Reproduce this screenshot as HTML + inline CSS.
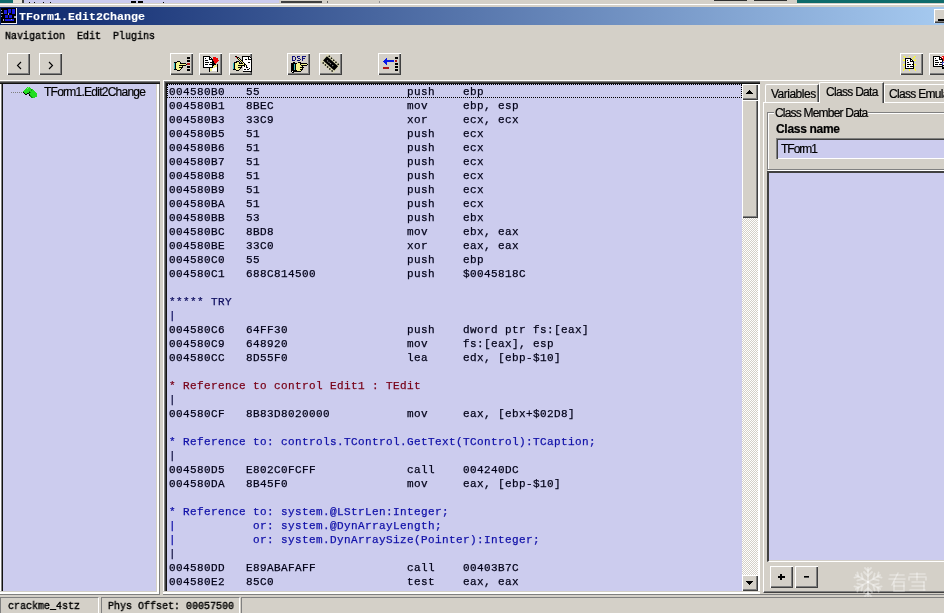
<!DOCTYPE html>
<html><head><meta charset="utf-8">
<style>
*{box-sizing:border-box;margin:0;padding:0}
html,body{width:944px;height:613px;overflow:hidden}
body{position:relative;background:#D4D0C8;font-family:"Liberation Sans",sans-serif;font-size:11px;color:#000;-webkit-text-stroke:0.2px currentColor}
.a{position:absolute}
body>div{will-change:transform}
.btn{position:absolute;width:23px;height:22px;background:#D4D0C8;box-shadow:inset 1px 1px 0 #fff, inset -1px -1px 0 #404040, inset -2px -2px 0 #808080}
.sb{position:absolute;width:16px;height:16px;background:#D4D0C8;box-shadow:inset 1px 1px 0 #fff, inset -1px -1px 0 #404040, inset -2px -2px 0 #808080}
.simsun{font-family:"Liberation Mono",monospace;font-size:11px;white-space:pre;transform-origin:0 0;transform:scaleX(0.9091);-webkit-text-stroke:0.4px currentColor}
.code{position:absolute;left:169px;font-family:"Liberation Mono",monospace;font-size:11px;letter-spacing:0.4px;white-space:pre;color:#000018;line-height:14px;-webkit-text-stroke:0.25px currentColor}
.lav{background:#CCCCEE}
.n{color:#101060}.r{color:#780018}.b{color:#1010A8}.d{color:#101040}
</style></head><body>

<!-- background window strip -->
<div class="a" style="left:0;top:0;width:944px;height:3px;background:#D4D0C8"></div>
<div class="a" style="left:0;top:0;width:13px;height:3px;background:#0F6B6B"></div>
<div class="a" style="left:13px;top:0;width:9px;height:3px;background:#E4E0D8"></div>
<div class="a" style="left:22px;top:0;width:2px;height:3px;background:#404040"></div>
<div class="a" style="left:24px;top:0;width:255px;height:3px;background:#CCCCEE"></div>
<div class="a" style="left:281px;top:1px;width:41px;height:2px;background:#404040"></div>
<div class="a" style="left:714px;top:0;width:33px;height:1px;background:#303030"></div>
<svg class="a" style="left:0;top:0" width="400" height="4" shape-rendering="crispEdges"><g fill="#000"><rect x="29" y="2" width="1" height="1"/><rect x="34" y="2" width="1" height="1"/><rect x="43" y="2" width="1" height="1"/><rect x="50" y="2" width="1" height="1"/><rect x="131" y="1" width="5" height="2"/><rect x="138" y="1" width="5" height="2"/><rect x="163" y="2" width="1" height="1"/><rect x="327" y="1" width="1" height="2" fill="#606060"/><rect x="379" y="1" width="1" height="2" fill="#909090"/></g></svg>
<div class="a" style="left:754px;top:0;width:33px;height:1px;background:#303030"></div>
<div class="a" style="left:797px;top:0;width:147px;height:3px;background:#0F6B6B"></div>
<div class="a" style="left:0;top:4px;width:944px;height:1px;background:#fff"></div>

<!-- title bar -->
<div class="a" style="left:0;top:7px;width:944px;height:18px;background:linear-gradient(to right,#0A246A,#A6CAF0)"></div>
<svg class="a" style="left:0;top:7px" width="18" height="18" shape-rendering="crispEdges">
<rect x="1" y="1" width="16" height="16" fill="#000"/><rect x="16" y="1" width="1" height="16" fill="#E8E8F8"/><rect x="1" y="16" width="16" height="1" fill="#E8E8F8"/>
<g fill="#1818E0"><rect x="4" y="3" width="3" height="4"/><rect x="8" y="2" width="3" height="4"/><rect x="12" y="2" width="3" height="5"/><rect x="5" y="8" width="3" height="3"/><rect x="9" y="8" width="3" height="3"/><rect x="5" y="12" width="9" height="2"/></g>
<g fill="#A0A0C0"><rect x="1" y="3" width="1" height="1"/><rect x="1" y="6" width="2" height="1"/><rect x="1" y="9" width="1" height="1"/><rect x="3" y="12" width="1" height="2"/><rect x="8" y="6" width="1" height="2"/><rect x="14" y="9" width="2" height="2"/><rect x="11" y="12" width="1" height="1"/></g>
</svg>
<div class="a simsun" style="left:19px;top:10px;font-size:11.6px;color:#fff;font-weight:bold;transform:none;letter-spacing:0.04px;-webkit-text-stroke:0.1px #fff">TForm1.Edit2Change</div>
<div class="btn" style="left:934px;top:9px;width:16px;height:14px"></div>
<div class="a" style="left:938px;top:19px;width:6px;height:2px;background:#000"></div>

<!-- menu -->
<div class="a simsun" style="left:5px;top:30px">Navigation</div>
<div class="a simsun" style="left:77px;top:30px">Edit</div>
<div class="a simsun" style="left:113px;top:30px">Plugins</div>

<!-- toolbar -->
<div class="btn" style="left:7px;top:53px"></div>
<div class="btn" style="left:39px;top:53px"></div>
<div class="btn" style="left:170px;top:53px"></div>
<div class="btn" style="left:199px;top:53px"></div>
<div class="btn" style="left:229px;top:53px"></div>
<div class="btn" style="left:287px;top:53px"></div>
<div class="btn" style="left:319px;top:53px"></div>
<div class="btn" style="left:378px;top:53px"></div>
<div class="btn" style="left:900px;top:53px"></div>
<div class="btn" style="left:929px;top:53px"></div>

<!-- icons -->
<svg class="a" style="left:170px;top:53px" width="23" height="22" shape-rendering="crispEdges"><rect x="17" y="4" width="3" height="1" fill="#000000"/><rect x="17" y="5" width="3" height="1" fill="#000000"/><rect x="17" y="7" width="3" height="1" fill="#000000"/><rect x="7" y="8" width="3" height="1" fill="#000000"/><rect x="17" y="8" width="3" height="1" fill="#000000"/><rect x="4" y="9" width="3" height="1" fill="#000000"/><rect x="7" y="9" width="3" height="1" fill="#F4F48C"/><rect x="10" y="9" width="1" height="1" fill="#000000"/><rect x="4" y="10" width="1" height="1" fill="#38C0C0"/><rect x="5" y="10" width="1" height="1" fill="#000000"/><rect x="6" y="10" width="4" height="1" fill="#F4F48C"/><rect x="10" y="10" width="6" height="1" fill="#000000"/><rect x="17" y="10" width="3" height="1" fill="#B01818"/><rect x="4" y="11" width="1" height="1" fill="#38C0C0"/><rect x="5" y="11" width="1" height="1" fill="#000000"/><rect x="6" y="11" width="10" height="1" fill="#F4F48C"/><rect x="16" y="11" width="1" height="1" fill="#000000"/><rect x="17" y="11" width="3" height="1" fill="#B01818"/><rect x="4" y="12" width="1" height="1" fill="#38C0C0"/><rect x="5" y="12" width="1" height="1" fill="#000000"/><rect x="6" y="12" width="3" height="1" fill="#F4F48C"/><rect x="9" y="12" width="7" height="1" fill="#000000"/><rect x="4" y="13" width="1" height="1" fill="#38C0C0"/><rect x="5" y="13" width="1" height="1" fill="#000000"/><rect x="6" y="13" width="6" height="1" fill="#F4F48C"/><rect x="12" y="13" width="1" height="1" fill="#000000"/><rect x="17" y="13" width="3" height="1" fill="#000000"/><rect x="4" y="14" width="1" height="1" fill="#38C0C0"/><rect x="5" y="14" width="1" height="1" fill="#000000"/><rect x="6" y="14" width="3" height="1" fill="#F4F48C"/><rect x="9" y="14" width="4" height="1" fill="#000000"/><rect x="17" y="14" width="3" height="1" fill="#000000"/><rect x="4" y="15" width="1" height="1" fill="#38C0C0"/><rect x="5" y="15" width="1" height="1" fill="#000000"/><rect x="6" y="15" width="5" height="1" fill="#F4F48C"/><rect x="11" y="15" width="1" height="1" fill="#000000"/><rect x="4" y="16" width="3" height="1" fill="#000000"/><rect x="7" y="16" width="3" height="1" fill="#F4F48C"/><rect x="10" y="16" width="1" height="1" fill="#000000"/><rect x="17" y="16" width="3" height="1" fill="#000000"/><rect x="7" y="17" width="3" height="1" fill="#000000"/><rect x="17" y="17" width="3" height="1" fill="#000000"/></svg>
<svg class="a" style="left:199px;top:53px" width="23" height="22" shape-rendering="crispEdges"><rect x="4" y="3" width="7" height="1" fill="#000000"/><rect x="4" y="4" width="1" height="1" fill="#000000"/><rect x="5" y="4" width="5" height="1" fill="#FFFFFF"/><rect x="10" y="4" width="2" height="1" fill="#000000"/><rect x="14" y="4" width="3" height="1" fill="#F00808"/><rect x="4" y="5" width="1" height="1" fill="#000000"/><rect x="5" y="5" width="1" height="1" fill="#FFFFFF"/><rect x="6" y="5" width="1" height="1" fill="#000000"/><rect x="7" y="5" width="3" height="1" fill="#FFFFFF"/><rect x="10" y="5" width="1" height="1" fill="#000000"/><rect x="11" y="5" width="1" height="1" fill="#FFFFFF"/><rect x="12" y="5" width="1" height="1" fill="#000000"/><rect x="14" y="5" width="5" height="1" fill="#F00808"/><rect x="4" y="6" width="1" height="1" fill="#000000"/><rect x="5" y="6" width="5" height="1" fill="#FFFFFF"/><rect x="10" y="6" width="4" height="1" fill="#000000"/><rect x="14" y="6" width="5" height="1" fill="#F00808"/><rect x="4" y="7" width="1" height="1" fill="#000000"/><rect x="5" y="7" width="1" height="1" fill="#FFFFFF"/><rect x="6" y="7" width="3" height="1" fill="#000000"/><rect x="9" y="7" width="4" height="1" fill="#FFFFFF"/><rect x="13" y="7" width="1" height="1" fill="#000000"/><rect x="14" y="7" width="6" height="1" fill="#F00808"/><rect x="4" y="8" width="1" height="1" fill="#000000"/><rect x="5" y="8" width="8" height="1" fill="#FFFFFF"/><rect x="13" y="8" width="2" height="1" fill="#000000"/><rect x="15" y="8" width="4" height="1" fill="#F00808"/><rect x="4" y="9" width="1" height="1" fill="#000000"/><rect x="5" y="9" width="1" height="1" fill="#FFFFFF"/><rect x="6" y="9" width="4" height="1" fill="#000000"/><rect x="10" y="9" width="1" height="1" fill="#FFFFFF"/><rect x="11" y="9" width="4" height="1" fill="#000000"/><rect x="15" y="9" width="3" height="1" fill="#F00808"/><rect x="4" y="10" width="1" height="1" fill="#000000"/><rect x="5" y="10" width="8" height="1" fill="#FFFFFF"/><rect x="13" y="10" width="3" height="1" fill="#000000"/><rect x="16" y="10" width="1" height="1" fill="#F00808"/><rect x="4" y="11" width="1" height="1" fill="#000000"/><rect x="5" y="11" width="1" height="1" fill="#FFFFFF"/><rect x="6" y="11" width="3" height="1" fill="#000000"/><rect x="9" y="11" width="1" height="1" fill="#FFFFFF"/><rect x="10" y="11" width="7" height="1" fill="#000000"/><rect x="18" y="11" width="1" height="1" fill="#000000"/><rect x="4" y="12" width="1" height="1" fill="#000000"/><rect x="5" y="12" width="8" height="1" fill="#FFFFFF"/><rect x="13" y="12" width="2" height="1" fill="#000000"/><rect x="15" y="12" width="3" height="1" fill="#F4F48C"/><rect x="18" y="12" width="1" height="1" fill="#000000"/><rect x="4" y="13" width="1" height="1" fill="#000000"/><rect x="5" y="13" width="8" height="1" fill="#FFFFFF"/><rect x="13" y="13" width="1" height="1" fill="#000000"/><rect x="14" y="13" width="4" height="1" fill="#F4F48C"/><rect x="18" y="13" width="1" height="1" fill="#000000"/><rect x="4" y="14" width="10" height="1" fill="#000000"/><rect x="14" y="14" width="2" height="1" fill="#F4F48C"/><rect x="16" y="14" width="2" height="1" fill="#FFFFFF"/><rect x="18" y="14" width="1" height="1" fill="#000000"/><rect x="10" y="15" width="1" height="1" fill="#000000"/><rect x="11" y="15" width="2" height="1" fill="#F4F48C"/><rect x="13" y="15" width="5" height="1" fill="#FFFFFF"/><rect x="18" y="15" width="1" height="1" fill="#000000"/><rect x="10" y="16" width="1" height="1" fill="#000000"/><rect x="11" y="16" width="2" height="1" fill="#F4F48C"/><rect x="13" y="16" width="5" height="1" fill="#FFFFFF"/><rect x="18" y="16" width="1" height="1" fill="#000000"/><rect x="10" y="17" width="1" height="1" fill="#000000"/><rect x="11" y="17" width="2" height="1" fill="#F4F48C"/><rect x="13" y="17" width="5" height="1" fill="#FFFFFF"/><rect x="18" y="17" width="1" height="1" fill="#000000"/><rect x="10" y="18" width="1" height="1" fill="#000000"/><rect x="18" y="18" width="1" height="1" fill="#000000"/></svg>
<svg class="a" style="left:229px;top:53px" width="23" height="22" shape-rendering="crispEdges"><rect x="6" y="3" width="2" height="1" fill="#000000"/><rect x="13" y="3" width="8" height="1" fill="#000000"/><rect x="7" y="4" width="1" height="1" fill="#F00808"/><rect x="8" y="4" width="2" height="1" fill="#000000"/><rect x="13" y="4" width="1" height="1" fill="#000000"/><rect x="14" y="4" width="5" height="1" fill="#FFFFFF"/><rect x="19" y="4" width="1" height="1" fill="#000000"/><rect x="20" y="4" width="1" height="1" fill="#FFFFFF"/><rect x="21" y="4" width="1" height="1" fill="#000000"/><rect x="8" y="5" width="1" height="1" fill="#000000"/><rect x="9" y="5" width="1" height="1" fill="#F4F48C"/><rect x="10" y="5" width="1" height="1" fill="#000000"/><rect x="13" y="5" width="1" height="1" fill="#000000"/><rect x="14" y="5" width="5" height="1" fill="#FFFFFF"/><rect x="19" y="5" width="1" height="1" fill="#000000"/><rect x="20" y="5" width="2" height="1" fill="#FFFFFF"/><rect x="22" y="5" width="1" height="1" fill="#000000"/><rect x="9" y="6" width="1" height="1" fill="#000000"/><rect x="10" y="6" width="1" height="1" fill="#F4F48C"/><rect x="11" y="6" width="1" height="1" fill="#000000"/><rect x="13" y="6" width="1" height="1" fill="#000000"/><rect x="14" y="6" width="2" height="1" fill="#FFFFFF"/><rect x="16" y="6" width="2" height="1" fill="#000000"/><rect x="18" y="6" width="1" height="1" fill="#FFFFFF"/><rect x="19" y="6" width="4" height="1" fill="#000000"/><rect x="10" y="7" width="1" height="1" fill="#000000"/><rect x="11" y="7" width="1" height="1" fill="#F4F48C"/><rect x="12" y="7" width="2" height="1" fill="#000000"/><rect x="14" y="7" width="8" height="1" fill="#FFFFFF"/><rect x="22" y="7" width="1" height="1" fill="#000000"/><rect x="7" y="8" width="3" height="1" fill="#000000"/><rect x="11" y="8" width="1" height="1" fill="#000000"/><rect x="12" y="8" width="1" height="1" fill="#F4F48C"/><rect x="13" y="8" width="1" height="1" fill="#000000"/><rect x="14" y="8" width="8" height="1" fill="#FFFFFF"/><rect x="22" y="8" width="1" height="1" fill="#000000"/><rect x="5" y="9" width="3" height="1" fill="#000000"/><rect x="8" y="9" width="2" height="1" fill="#F4F48C"/><rect x="10" y="9" width="1" height="1" fill="#000000"/><rect x="12" y="9" width="1" height="1" fill="#000000"/><rect x="13" y="9" width="1" height="1" fill="#F4F48C"/><rect x="14" y="9" width="1" height="1" fill="#000000"/><rect x="15" y="9" width="4" height="1" fill="#FFFFFF"/><rect x="19" y="9" width="2" height="1" fill="#000000"/><rect x="21" y="9" width="1" height="1" fill="#FFFFFF"/><rect x="22" y="9" width="1" height="1" fill="#000000"/><rect x="4" y="10" width="1" height="1" fill="#38C0C0"/><rect x="5" y="10" width="1" height="1" fill="#000000"/><rect x="6" y="10" width="4" height="1" fill="#F4F48C"/><rect x="10" y="10" width="4" height="1" fill="#000000"/><rect x="14" y="10" width="1" height="1" fill="#F4F48C"/><rect x="15" y="10" width="1" height="1" fill="#000000"/><rect x="16" y="10" width="6" height="1" fill="#FFFFFF"/><rect x="22" y="10" width="1" height="1" fill="#000000"/><rect x="4" y="11" width="1" height="1" fill="#38C0C0"/><rect x="5" y="11" width="1" height="1" fill="#000000"/><rect x="6" y="11" width="9" height="1" fill="#F4F48C"/><rect x="15" y="11" width="2" height="1" fill="#000000"/><rect x="17" y="11" width="5" height="1" fill="#FFFFFF"/><rect x="22" y="11" width="1" height="1" fill="#000000"/><rect x="4" y="12" width="1" height="1" fill="#38C0C0"/><rect x="5" y="12" width="1" height="1" fill="#000000"/><rect x="6" y="12" width="3" height="1" fill="#F4F48C"/><rect x="9" y="12" width="7" height="1" fill="#000000"/><rect x="16" y="12" width="1" height="1" fill="#F4F48C"/><rect x="17" y="12" width="1" height="1" fill="#000000"/><rect x="18" y="12" width="4" height="1" fill="#FFFFFF"/><rect x="22" y="12" width="1" height="1" fill="#000000"/><rect x="4" y="13" width="1" height="1" fill="#38C0C0"/><rect x="5" y="13" width="1" height="1" fill="#000000"/><rect x="6" y="13" width="6" height="1" fill="#F4F48C"/><rect x="12" y="13" width="1" height="1" fill="#000000"/><rect x="14" y="13" width="1" height="1" fill="#FFFFFF"/><rect x="15" y="13" width="1" height="1" fill="#000000"/><rect x="16" y="13" width="1" height="1" fill="#FFFFFF"/><rect x="17" y="13" width="1" height="1" fill="#000000"/><rect x="18" y="13" width="4" height="1" fill="#FFFFFF"/><rect x="22" y="13" width="1" height="1" fill="#000000"/><rect x="4" y="14" width="1" height="1" fill="#38C0C0"/><rect x="5" y="14" width="1" height="1" fill="#000000"/><rect x="6" y="14" width="3" height="1" fill="#F4F48C"/><rect x="9" y="14" width="4" height="1" fill="#000000"/><rect x="14" y="14" width="3" height="1" fill="#FFFFFF"/><rect x="17" y="14" width="2" height="1" fill="#000000"/><rect x="19" y="14" width="3" height="1" fill="#FFFFFF"/><rect x="22" y="14" width="1" height="1" fill="#000000"/><rect x="4" y="15" width="1" height="1" fill="#38C0C0"/><rect x="5" y="15" width="1" height="1" fill="#000000"/><rect x="6" y="15" width="5" height="1" fill="#F4F48C"/><rect x="11" y="15" width="1" height="1" fill="#000000"/><rect x="14" y="15" width="6" height="1" fill="#FFFFFF"/><rect x="20" y="15" width="1" height="1" fill="#000000"/><rect x="21" y="15" width="1" height="1" fill="#FFFFFF"/><rect x="22" y="15" width="1" height="1" fill="#000000"/><rect x="4" y="16" width="3" height="1" fill="#000000"/><rect x="7" y="16" width="3" height="1" fill="#F4F48C"/><rect x="10" y="16" width="1" height="1" fill="#000000"/><rect x="14" y="16" width="1" height="1" fill="#FFFFFF"/><rect x="15" y="16" width="2" height="1" fill="#000000"/><rect x="17" y="16" width="1" height="1" fill="#FFFFFF"/><rect x="18" y="16" width="2" height="1" fill="#000000"/><rect x="20" y="16" width="2" height="1" fill="#FFFFFF"/><rect x="22" y="16" width="1" height="1" fill="#000000"/><rect x="7" y="17" width="3" height="1" fill="#000000"/><rect x="14" y="17" width="8" height="1" fill="#FFFFFF"/><rect x="22" y="17" width="1" height="1" fill="#000000"/><rect x="14" y="18" width="9" height="1" fill="#000000"/></svg>
<svg class="a" style="left:287px;top:53px" width="23" height="22" shape-rendering="crispEdges"><rect x="5" y="3" width="3" height="1" fill="#101078"/><rect x="10" y="3" width="3" height="1" fill="#101078"/><rect x="15" y="3" width="4" height="1" fill="#101078"/><rect x="5" y="4" width="1" height="1" fill="#101078"/><rect x="8" y="4" width="1" height="1" fill="#101078"/><rect x="10" y="4" width="1" height="1" fill="#101078"/><rect x="15" y="4" width="1" height="1" fill="#101078"/><rect x="5" y="5" width="1" height="1" fill="#101078"/><rect x="8" y="5" width="1" height="1" fill="#101078"/><rect x="11" y="5" width="2" height="1" fill="#101078"/><rect x="15" y="5" width="3" height="1" fill="#101078"/><rect x="5" y="6" width="1" height="1" fill="#101078"/><rect x="8" y="6" width="1" height="1" fill="#101078"/><rect x="13" y="6" width="1" height="1" fill="#101078"/><rect x="15" y="6" width="1" height="1" fill="#101078"/><rect x="5" y="7" width="3" height="1" fill="#101078"/><rect x="10" y="7" width="3" height="1" fill="#101078"/><rect x="15" y="7" width="1" height="1" fill="#101078"/><rect x="6" y="9" width="2" height="1" fill="#000000"/><rect x="11" y="9" width="3" height="1" fill="#000000"/><rect x="4" y="10" width="6" height="1" fill="#000000"/><rect x="10" y="10" width="3" height="1" fill="#F4F48C"/><rect x="13" y="10" width="7" height="1" fill="#000000"/><rect x="4" y="11" width="3" height="1" fill="#000000"/><rect x="7" y="11" width="1" height="1" fill="#38C0C0"/><rect x="8" y="11" width="1" height="1" fill="#000000"/><rect x="9" y="11" width="4" height="1" fill="#F4F48C"/><rect x="13" y="11" width="1" height="1" fill="#000000"/><rect x="14" y="11" width="6" height="1" fill="#F4F48C"/><rect x="20" y="11" width="1" height="1" fill="#000000"/><rect x="4" y="12" width="3" height="1" fill="#000000"/><rect x="7" y="12" width="1" height="1" fill="#38C0C0"/><rect x="8" y="12" width="1" height="1" fill="#000000"/><rect x="9" y="12" width="5" height="1" fill="#F4F48C"/><rect x="14" y="12" width="6" height="1" fill="#000000"/><rect x="4" y="13" width="3" height="1" fill="#000000"/><rect x="7" y="13" width="1" height="1" fill="#38C0C0"/><rect x="8" y="13" width="1" height="1" fill="#000000"/><rect x="9" y="13" width="6" height="1" fill="#F4F48C"/><rect x="15" y="13" width="1" height="1" fill="#000000"/><rect x="4" y="14" width="3" height="1" fill="#000000"/><rect x="7" y="14" width="1" height="1" fill="#38C0C0"/><rect x="8" y="14" width="1" height="1" fill="#000000"/><rect x="9" y="14" width="4" height="1" fill="#F4F48C"/><rect x="13" y="14" width="4" height="1" fill="#000000"/><rect x="4" y="15" width="3" height="1" fill="#000000"/><rect x="7" y="15" width="1" height="1" fill="#38C0C0"/><rect x="8" y="15" width="1" height="1" fill="#000000"/><rect x="9" y="15" width="6" height="1" fill="#F4F48C"/><rect x="15" y="15" width="1" height="1" fill="#000000"/><rect x="4" y="16" width="3" height="1" fill="#000000"/><rect x="7" y="16" width="1" height="1" fill="#38C0C0"/><rect x="8" y="16" width="1" height="1" fill="#000000"/><rect x="9" y="16" width="4" height="1" fill="#F4F48C"/><rect x="13" y="16" width="3" height="1" fill="#000000"/><rect x="4" y="17" width="6" height="1" fill="#000000"/><rect x="10" y="17" width="4" height="1" fill="#F4F48C"/><rect x="14" y="17" width="1" height="1" fill="#000000"/><rect x="4" y="18" width="1" height="1" fill="#000000"/><rect x="5" y="18" width="1" height="1" fill="#FFFFFF"/><rect x="6" y="18" width="8" height="1" fill="#000000"/><rect x="5" y="19" width="2" height="1" fill="#000000"/></svg>
<svg class="a" style="left:378px;top:53px" width="23" height="22" shape-rendering="crispEdges"><rect x="17" y="4" width="3" height="1" fill="#000000"/><rect x="8" y="5" width="1" height="1" fill="#0818E8"/><rect x="17" y="5" width="3" height="1" fill="#000000"/><rect x="7" y="6" width="2" height="1" fill="#0818E8"/><rect x="6" y="7" width="10" height="1" fill="#0818E8"/><rect x="17" y="7" width="2" height="1" fill="#B01818"/><rect x="5" y="8" width="11" height="1" fill="#0818E8"/><rect x="17" y="8" width="2" height="1" fill="#B01818"/><rect x="6" y="9" width="3" height="1" fill="#0818E8"/><rect x="7" y="10" width="2" height="1" fill="#0818E8"/><rect x="17" y="10" width="3" height="1" fill="#000000"/><rect x="8" y="11" width="1" height="1" fill="#0818E8"/><rect x="17" y="11" width="3" height="1" fill="#000000"/><rect x="17" y="13" width="3" height="1" fill="#000000"/><rect x="5" y="14" width="6" height="1" fill="#B01818"/><rect x="17" y="14" width="3" height="1" fill="#000000"/><rect x="5" y="15" width="6" height="1" fill="#B01818"/><rect x="17" y="16" width="3" height="1" fill="#000000"/><rect x="17" y="17" width="3" height="1" fill="#000000"/></svg>
<svg class="a" style="left:900px;top:53px" width="23" height="22" shape-rendering="crispEdges"><rect x="3" y="3" width="1" height="1" fill="#E0E070"/><rect x="4" y="3" width="1" height="1" fill="#FFFF30"/><rect x="9" y="3" width="1" height="1" fill="#FFFF30"/><rect x="14" y="3" width="1" height="1" fill="#FFFF30"/><rect x="15" y="3" width="1" height="1" fill="#E0E070"/><rect x="4" y="4" width="1" height="1" fill="#FFFF30"/><rect x="5" y="4" width="1" height="1" fill="#E0E070"/><rect x="13" y="4" width="1" height="1" fill="#E0E070"/><rect x="14" y="4" width="1" height="1" fill="#FFFF30"/><rect x="5" y="5" width="6" height="1" fill="#000000"/><rect x="12" y="5" width="1" height="1" fill="#E0E070"/><rect x="13" y="5" width="1" height="1" fill="#FFFF30"/><rect x="3" y="6" width="1" height="1" fill="#FFFF30"/><rect x="5" y="6" width="1" height="1" fill="#000000"/><rect x="6" y="6" width="4" height="1" fill="#FFFFFF"/><rect x="10" y="6" width="2" height="1" fill="#000000"/><rect x="12" y="6" width="1" height="1" fill="#E0E070"/><rect x="15" y="6" width="1" height="1" fill="#FFFF30"/><rect x="3" y="7" width="2" height="1" fill="#FFFF30"/><rect x="5" y="7" width="1" height="1" fill="#000000"/><rect x="6" y="7" width="1" height="1" fill="#FFFFFF"/><rect x="7" y="7" width="1" height="1" fill="#000000"/><rect x="8" y="7" width="2" height="1" fill="#FFFFFF"/><rect x="10" y="7" width="1" height="1" fill="#000000"/><rect x="11" y="7" width="1" height="1" fill="#FFFFFF"/><rect x="12" y="7" width="1" height="1" fill="#000000"/><rect x="14" y="7" width="2" height="1" fill="#FFFF30"/><rect x="5" y="8" width="1" height="1" fill="#000000"/><rect x="6" y="8" width="4" height="1" fill="#FFFFFF"/><rect x="10" y="8" width="4" height="1" fill="#000000"/><rect x="5" y="9" width="1" height="1" fill="#000000"/><rect x="6" y="9" width="1" height="1" fill="#FFFFFF"/><rect x="7" y="9" width="2" height="1" fill="#000000"/><rect x="9" y="9" width="4" height="1" fill="#FFFFFF"/><rect x="13" y="9" width="1" height="1" fill="#000000"/><rect x="5" y="10" width="1" height="1" fill="#000000"/><rect x="6" y="10" width="7" height="1" fill="#FFFFFF"/><rect x="13" y="10" width="1" height="1" fill="#000000"/><rect x="3" y="11" width="2" height="1" fill="#FFFF30"/><rect x="5" y="11" width="1" height="1" fill="#000000"/><rect x="6" y="11" width="1" height="1" fill="#FFFFFF"/><rect x="7" y="11" width="4" height="1" fill="#000000"/><rect x="11" y="11" width="1" height="1" fill="#FFFFFF"/><rect x="12" y="11" width="2" height="1" fill="#000000"/><rect x="14" y="11" width="2" height="1" fill="#FFFF30"/><rect x="3" y="12" width="1" height="1" fill="#FFFF30"/><rect x="5" y="12" width="1" height="1" fill="#000000"/><rect x="6" y="12" width="7" height="1" fill="#FFFFFF"/><rect x="13" y="12" width="1" height="1" fill="#000000"/><rect x="15" y="12" width="1" height="1" fill="#FFFF30"/><rect x="5" y="13" width="1" height="1" fill="#000000"/><rect x="6" y="13" width="1" height="1" fill="#FFFFFF"/><rect x="7" y="13" width="2" height="1" fill="#000000"/><rect x="9" y="13" width="1" height="1" fill="#FFFFFF"/><rect x="10" y="13" width="4" height="1" fill="#000000"/><rect x="4" y="14" width="1" height="1" fill="#E0E070"/><rect x="5" y="14" width="1" height="1" fill="#000000"/><rect x="6" y="14" width="7" height="1" fill="#FFFFFF"/><rect x="13" y="14" width="1" height="1" fill="#000000"/><rect x="14" y="14" width="1" height="1" fill="#E0E070"/><rect x="4" y="15" width="1" height="1" fill="#FFFF30"/><rect x="5" y="15" width="9" height="1" fill="#000000"/><rect x="14" y="15" width="1" height="1" fill="#FFFF30"/><rect x="3" y="16" width="1" height="1" fill="#E0E070"/><rect x="4" y="16" width="1" height="1" fill="#FFFF30"/><rect x="9" y="16" width="1" height="1" fill="#FFFF30"/><rect x="14" y="16" width="1" height="1" fill="#FFFF30"/><rect x="15" y="16" width="1" height="1" fill="#E0E070"/><rect x="3" y="17" width="1" height="1" fill="#FFFF30"/><rect x="9" y="17" width="1" height="1" fill="#FFFF30"/><rect x="15" y="17" width="1" height="1" fill="#FFFF30"/></svg>
<svg class="a" style="left:929px;top:53px" width="23" height="22" shape-rendering="crispEdges"><rect x="4" y="3" width="7" height="1" fill="#000000"/><rect x="13" y="3" width="2" height="1" fill="#F00808"/><rect x="4" y="4" width="1" height="1" fill="#000000"/><rect x="5" y="4" width="5" height="1" fill="#FFFFFF"/><rect x="10" y="4" width="2" height="1" fill="#000000"/><rect x="12" y="4" width="1" height="1" fill="#F00808"/><rect x="13" y="4" width="1" height="1" fill="#FFFFFF"/><rect x="14" y="4" width="1" height="1" fill="#F00808"/><rect x="4" y="5" width="1" height="1" fill="#000000"/><rect x="5" y="5" width="1" height="1" fill="#FFFFFF"/><rect x="6" y="5" width="1" height="1" fill="#000000"/><rect x="7" y="5" width="3" height="1" fill="#FFFFFF"/><rect x="10" y="5" width="1" height="1" fill="#000000"/><rect x="11" y="5" width="1" height="1" fill="#FFFFFF"/><rect x="12" y="5" width="1" height="1" fill="#000000"/><rect x="13" y="5" width="2" height="1" fill="#F00808"/><rect x="4" y="6" width="1" height="1" fill="#000000"/><rect x="5" y="6" width="5" height="1" fill="#FFFFFF"/><rect x="10" y="6" width="4" height="1" fill="#000000"/><rect x="14" y="6" width="1" height="1" fill="#F00808"/><rect x="4" y="7" width="1" height="1" fill="#000000"/><rect x="5" y="7" width="1" height="1" fill="#FFFFFF"/><rect x="6" y="7" width="3" height="1" fill="#000000"/><rect x="9" y="7" width="4" height="1" fill="#FFFFFF"/><rect x="13" y="7" width="1" height="1" fill="#000000"/><rect x="14" y="7" width="1" height="1" fill="#F00808"/><rect x="4" y="8" width="1" height="1" fill="#000000"/><rect x="5" y="8" width="8" height="1" fill="#FFFFFF"/><rect x="13" y="8" width="1" height="1" fill="#000000"/><rect x="4" y="9" width="1" height="1" fill="#000000"/><rect x="5" y="9" width="1" height="1" fill="#FFFFFF"/><rect x="6" y="9" width="4" height="1" fill="#000000"/><rect x="10" y="9" width="1" height="1" fill="#FFFFFF"/><rect x="11" y="9" width="2" height="1" fill="#000000"/><rect x="13" y="9" width="2" height="1" fill="#4040C0"/><rect x="4" y="10" width="1" height="1" fill="#000000"/><rect x="5" y="10" width="8" height="1" fill="#FFFFFF"/><rect x="13" y="10" width="1" height="1" fill="#4040C0"/><rect x="14" y="10" width="1" height="1" fill="#FFFFFF"/><rect x="4" y="11" width="1" height="1" fill="#000000"/><rect x="5" y="11" width="1" height="1" fill="#FFFFFF"/><rect x="6" y="11" width="3" height="1" fill="#000000"/><rect x="9" y="11" width="1" height="1" fill="#FFFFFF"/><rect x="10" y="11" width="3" height="1" fill="#000000"/><rect x="13" y="11" width="1" height="1" fill="#4040C0"/><rect x="14" y="11" width="1" height="1" fill="#FFFFFF"/><rect x="4" y="12" width="1" height="1" fill="#000000"/><rect x="5" y="12" width="8" height="1" fill="#FFFFFF"/><rect x="13" y="12" width="2" height="1" fill="#000000"/><rect x="4" y="13" width="10" height="1" fill="#000000"/><rect x="13" y="14" width="2" height="1" fill="#000000"/><rect x="13" y="15" width="2" height="1" fill="#000000"/></svg>
<svg class="a" style="left:319px;top:53px" width="23" height="22">
<g transform="rotate(42 11.5 10.5)">
<rect x="3" y="5" width="17" height="11" fill="#ECEC98" opacity="0.35"/>
<rect x="4" y="7.5" width="15" height="5.8" fill="#000"/>
<g fill="#000"><rect x="5" y="5.2" width="1.5" height="1.5"/><rect x="8" y="5.2" width="1.5" height="1.5"/><rect x="11" y="5.2" width="1.5" height="1.5"/><rect x="14" y="5.2" width="1.5" height="1.5"/><rect x="17" y="5.2" width="1.5" height="1.5"/>
<rect x="5" y="14.3" width="1.5" height="1.5"/><rect x="8" y="14.3" width="1.5" height="1.5"/><rect x="11" y="14.3" width="1.5" height="1.5"/><rect x="14" y="14.3" width="1.5" height="1.5"/><rect x="17" y="14.3" width="1.5" height="1.5"/></g>
<rect x="7" y="10" width="1.2" height="1.2" fill="#8C8C8C"/><rect x="9" y="10" width="1.2" height="1.2" fill="#8C8C8C"/><rect x="11" y="10" width="1.2" height="1.2" fill="#8C8C8C"/><rect x="14" y="10" width="1.2" height="1.2" fill="#8C8C8C"/>
</g></svg>
<svg class="a" style="left:16px;top:61px" width="6" height="9"><polyline points="5,1 1.5,4.5 5,8" fill="none" stroke="#000" stroke-width="1.1"/></svg>
<svg class="a" style="left:48px;top:61px" width="6" height="9"><polyline points="1,1 4.5,4.5 1,8" fill="none" stroke="#000" stroke-width="1.1"/></svg>

<!-- left panel -->
<div class="a lav" style="left:0;top:80px;width:160px;height:515px;box-shadow:inset 0 1px 0 #fff, inset 0 2px 0 #808080, inset 0 3px 0 #404040, inset 0 4px 0 #101010, inset -1px 0 0 #808080, inset 0 -1px 0 #808080, inset -3px 0 0 #fff, inset 0 -3px 0 #fff, inset 0 -4px 0 #D4D0C8, inset -4px 0 0 #D4D0C8, inset 1px 0 0 #fff, inset 2px 0 0 #808080, inset 3px 0 0 #101010"></div>

<!-- tree -->
<div class="a" style="left:11px;top:92px;width:12px;height:1px;background:repeating-linear-gradient(to right,#808080 0 1px,transparent 1px 2px)"></div>
<svg class="a" style="left:23px;top:87px" width="14" height="11" shape-rendering="crispEdges"><rect x="4" y="0" width="1" height="1" fill="#22DD22"/><rect x="5" y="0" width="1" height="1" fill="#7CF07C"/><rect x="6" y="0" width="1" height="1" fill="#22DD22"/><rect x="3" y="1" width="1" height="1" fill="#22DD22"/><rect x="4" y="1" width="1" height="1" fill="#7CF07C"/><rect x="5" y="1" width="3" height="1" fill="#22DD22"/><rect x="2" y="2" width="6" height="1" fill="#22DD22"/><rect x="8" y="2" width="1" height="1" fill="#10A010"/><rect x="9" y="2" width="1" height="1" fill="#22DD22"/><rect x="1" y="3" width="7" height="1" fill="#22DD22"/><rect x="8" y="3" width="1" height="1" fill="#10A010"/><rect x="9" y="3" width="2" height="1" fill="#22DD22"/><rect x="0" y="4" width="6" height="1" fill="#22DD22"/><rect x="6" y="4" width="1" height="1" fill="#10A010"/><rect x="7" y="4" width="5" height="1" fill="#22DD22"/><rect x="0" y="5" width="1" height="1" fill="#000000"/><rect x="1" y="5" width="5" height="1" fill="#22DD22"/><rect x="6" y="5" width="1" height="1" fill="#000000"/><rect x="7" y="5" width="1" height="1" fill="#10A010"/><rect x="8" y="5" width="5" height="1" fill="#22DD22"/><rect x="1" y="6" width="1" height="1" fill="#000000"/><rect x="2" y="6" width="2" height="1" fill="#22DD22"/><rect x="4" y="6" width="2" height="1" fill="#000000"/><rect x="6" y="6" width="8" height="1" fill="#22DD22"/><rect x="2" y="7" width="2" height="1" fill="#000000"/><rect x="6" y="7" width="1" height="1" fill="#000000"/><rect x="7" y="7" width="7" height="1" fill="#22DD22"/><rect x="6" y="8" width="1" height="1" fill="#000000"/><rect x="7" y="8" width="1" height="1" fill="#10A010"/><rect x="8" y="8" width="6" height="1" fill="#22DD22"/><rect x="7" y="9" width="2" height="1" fill="#10A010"/><rect x="9" y="9" width="5" height="1" fill="#22DD22"/><rect x="8" y="10" width="2" height="1" fill="#10A010"/><rect x="10" y="10" width="2" height="1" fill="#22DD22"/></svg>
<div class="a" style="left:44px;top:85px;font-size:12px;letter-spacing:-0.75px;white-space:pre">TForm1.Edit2Change</div>

<!-- code panel -->
<div class="a lav" style="left:163px;top:80px;width:597px;height:515px;box-shadow:inset 0 -1px 0 #808080, inset 0 -3px 0 #fff, inset 0 -4px 0 #D4D0C8, inset 1px 1px 0 #fff, inset 2px 2px 0 #808080, inset 3px 3px 0 #404040, inset 4px 4px 0 #101010, inset -2px 0 0 #fff"></div>

<!-- code -->
<div class="code" style="top:85px">004580B0   55                     push    ebp
004580B1   8BEC                   mov     ebp, esp
004580B3   33C9                   xor     ecx, ecx
004580B5   51                     push    ecx
004580B6   51                     push    ecx
004580B7   51                     push    ecx
004580B8   51                     push    ecx
004580B9   51                     push    ecx
004580BA   51                     push    ecx
004580BB   53                     push    ebx
004580BC   8BD8                   mov     ebx, eax
004580BE   33C0                   xor     eax, eax
004580C0   55                     push    ebp
004580C1   688C814500             push    $0045818C

<span class="n">***** TRY</span>
<span class="n">|</span>
004580C6   64FF30                 push    dword ptr fs:[eax]
004580C9   648920                 mov     fs:[eax], esp
004580CC   8D55F0                 lea     edx, [ebp-$10]

<span class="r">* Reference to control Edit1 : TEdit</span>
<span class="d">|</span>
004580CF   8B83D8020000           mov     eax, [ebx+$02D8]

<span class="b">* Reference to: controls.TControl.GetText(TControl):TCaption;</span>
<span class="d">|</span>
004580D5   E802C0FCFF             call    004240DC
004580DA   8B45F0                 mov     eax, [ebp-$10]

<span class="b">* Reference to: system.@LStrLen:Integer;</span>
<span class="b">|           or: system.@DynArrayLength;</span>
<span class="b">|           or: system.DynArraySize(Pointer):Integer;</span>
<span class="d">|</span>
004580DD   E89ABAFAFF             call    00403B7C
004580E2   85C0                   test    eax, eax</div>
<div class="a" style="left:167px;top:84px;width:575px;height:14px;outline:1px dotted #000;outline-offset:-1px"></div>

<!-- scrollbar -->
<svg class="a" style="left:742px;top:100px" width="16" height="475" shape-rendering="crispEdges"><defs><pattern id="dith" width="2" height="2" patternUnits="userSpaceOnUse"><rect width="2" height="2" fill="#D4D0C8"/><rect width="1" height="1" fill="#fff"/><rect x="1" y="1" width="1" height="1" fill="#fff"/></pattern></defs><rect width="16" height="475" fill="url(#dith)"/></svg>
<div class="sb" style="left:742px;top:84px"></div>
<svg class="a" style="left:746px;top:90px" width="7" height="4" shape-rendering="crispEdges"><rect x="3" y="0" width="1" height="1"/><rect x="2" y="1" width="3" height="1"/><rect x="1" y="2" width="5" height="1"/><rect x="0" y="3" width="7" height="1"/></svg>
<div class="sb" style="left:742px;top:100px;height:118px"></div>
<div class="sb" style="left:742px;top:575px"></div>
<svg class="a" style="left:746px;top:581px" width="7" height="4" shape-rendering="crispEdges"><rect x="0" y="0" width="7" height="1"/><rect x="1" y="1" width="5" height="1"/><rect x="2" y="2" width="3" height="1"/><rect x="3" y="3" width="1" height="1"/></svg>
<!-- right panel -->
<div class="a" style="left:758px;top:80px;width:186px;height:1px;background:#fff"></div>
<!-- tab page -->
<div class="a" style="left:763px;top:102px;width:181px;height:491px;border-top:1px solid #fff;border-left:1px solid #fff;border-bottom:1px solid #404040;box-shadow:inset 0 -1px 0 #808080"></div>
<!-- tabs -->
<div class="a" style="left:765px;top:84px;width:54px;height:18px;border-top:1px solid #fff;border-left:1px solid #fff;border-right:1px solid #404040;border-top-left-radius:2px;box-shadow:inset -1px 0 0 #808080"></div>
<div class="a" style="left:771px;top:87px;font-size:12px;letter-spacing:-0.5px;white-space:pre">Variables</div>
<div class="a" style="left:819px;top:82px;width:65px;height:21px;background:#D4D0C8;border-top:1px solid #fff;border-left:1px solid #fff;border-right:1px solid #404040;border-top-left-radius:2px;box-shadow:inset -1px 0 0 #808080"></div>
<div class="a" style="left:826px;top:85px;font-size:12px;letter-spacing:-0.7px;white-space:pre">Class Data</div>
<div class="a" style="left:884px;top:84px;width:70px;height:18px;border-top:1px solid #fff;border-left:1px solid #fff"></div>
<div class="a" style="left:889px;top:87px;font-size:12px;letter-spacing:-0.7px;white-space:pre">Class Emulation</div>
<!-- group box -->
<div class="a" style="left:767px;top:112px;width:190px;height:58px;border:1px solid #808080;box-shadow:inset 1px 1px 0 #fff, 1px 1px 0 #fff"></div>
<div class="a" style="left:774px;top:106px;padding:0 1px;background:#D4D0C8;font-size:12px;letter-spacing:-0.8px;white-space:pre">Class Member Data</div>
<div class="a" style="left:776px;top:122px;font-size:12px;letter-spacing:-0.3px;font-weight:bold;white-space:pre">Class name</div>
<div class="a lav" style="left:776px;top:138px;width:180px;height:21px;box-shadow:inset 1px 1px 0 #808080, inset 2px 2px 0 #404040, inset 0 -1px 0 #fff"></div>
<div class="a" style="left:781px;top:142px;font-size:12px;letter-spacing:-1px;white-space:pre">TForm1</div>
<!-- listbox -->
<div class="a lav" style="left:767px;top:171px;width:190px;height:391px;border-top:2px solid #404040;border-left:2px solid #404040;border-bottom:1px solid #fff;box-shadow:inset 0 -1px 0 #D4D0C8"></div>
<div class="btn" style="left:770px;top:566px"></div>
<div class="a" style="left:778px;top:576px;width:7px;height:2px;background:#000"></div><div class="a" style="left:780px;top:574px;width:2px;height:6px;background:#000"></div>
<div class="btn" style="left:795px;top:566px"></div>
<div class="a" style="left:804px;top:576px;width:5px;height:1px;background:#000"></div><div class="a" style="left:804px;top:577px;width:5px;height:1px;background:#505050"></div>

<!-- watermark -->
<div class="a" style="left:758px;top:594px;width:186px;height:1px;background:#808080"></div>
<svg class="a" style="left:850px;top:562px" width="90" height="38">
<defs><filter id="wb"><feGaussianBlur stdDeviation="0.45"/></filter></defs>
<g filter="url(#wb)" stroke="rgba(255,255,255,0.38)" stroke-width="1.8" fill="none" stroke-linecap="round">
<g transform="translate(18 20)">
<g id="arm"><line x1="0" y1="0" x2="0" y2="-14"/><polyline points="-4,-10 0,-6 4,-10"/><polyline points="-3,-14 0,-11 3,-14"/></g>
<use href="#arm" transform="rotate(60)"/><use href="#arm" transform="rotate(120)"/><use href="#arm" transform="rotate(180)"/><use href="#arm" transform="rotate(240)"/><use href="#arm" transform="rotate(300)"/>
</g>
<g stroke-width="1.6">
<line x1="40" y1="13" x2="54" y2="13"/><line x1="39" y1="17" x2="55" y2="17"/><line x1="48" y1="11" x2="42" y2="23"/>
<rect x="44" y="20" width="10" height="9"/><line x1="44" y1="24" x2="54" y2="24"/>
<line x1="60" y1="12" x2="75" y2="12"/><line x1="67" y1="11" x2="67" y2="18"/><path d="M59 15v3M76 15v3M59 15h17"/>
<line x1="62" y1="20" x2="74" y2="20"/><line x1="62" y1="24" x2="74" y2="24"/><line x1="60" y1="28" x2="75" y2="28"/><line x1="74" y1="20" x2="74" y2="28"/>
</g></g></svg>
<!-- status bar -->
<div class="a" style="left:0;top:597px;width:99px;height:16px;border-top:1px solid #808080;border-left:1px solid #808080;border-right:1px solid #fff"></div>
<div class="a" style="left:101px;top:597px;width:139px;height:16px;border-top:1px solid #808080;border-left:1px solid #808080;border-right:1px solid #fff"></div>
<div class="a" style="left:241px;top:597px;width:703px;height:16px;border-top:1px solid #808080;border-left:1px solid #808080"></div>
<div class="a simsun" style="left:8px;top:600px">crackme_4stz</div>
<div class="a simsun" style="left:108px;top:600px">Phys Offset: 00057500</div>

</body></html>
